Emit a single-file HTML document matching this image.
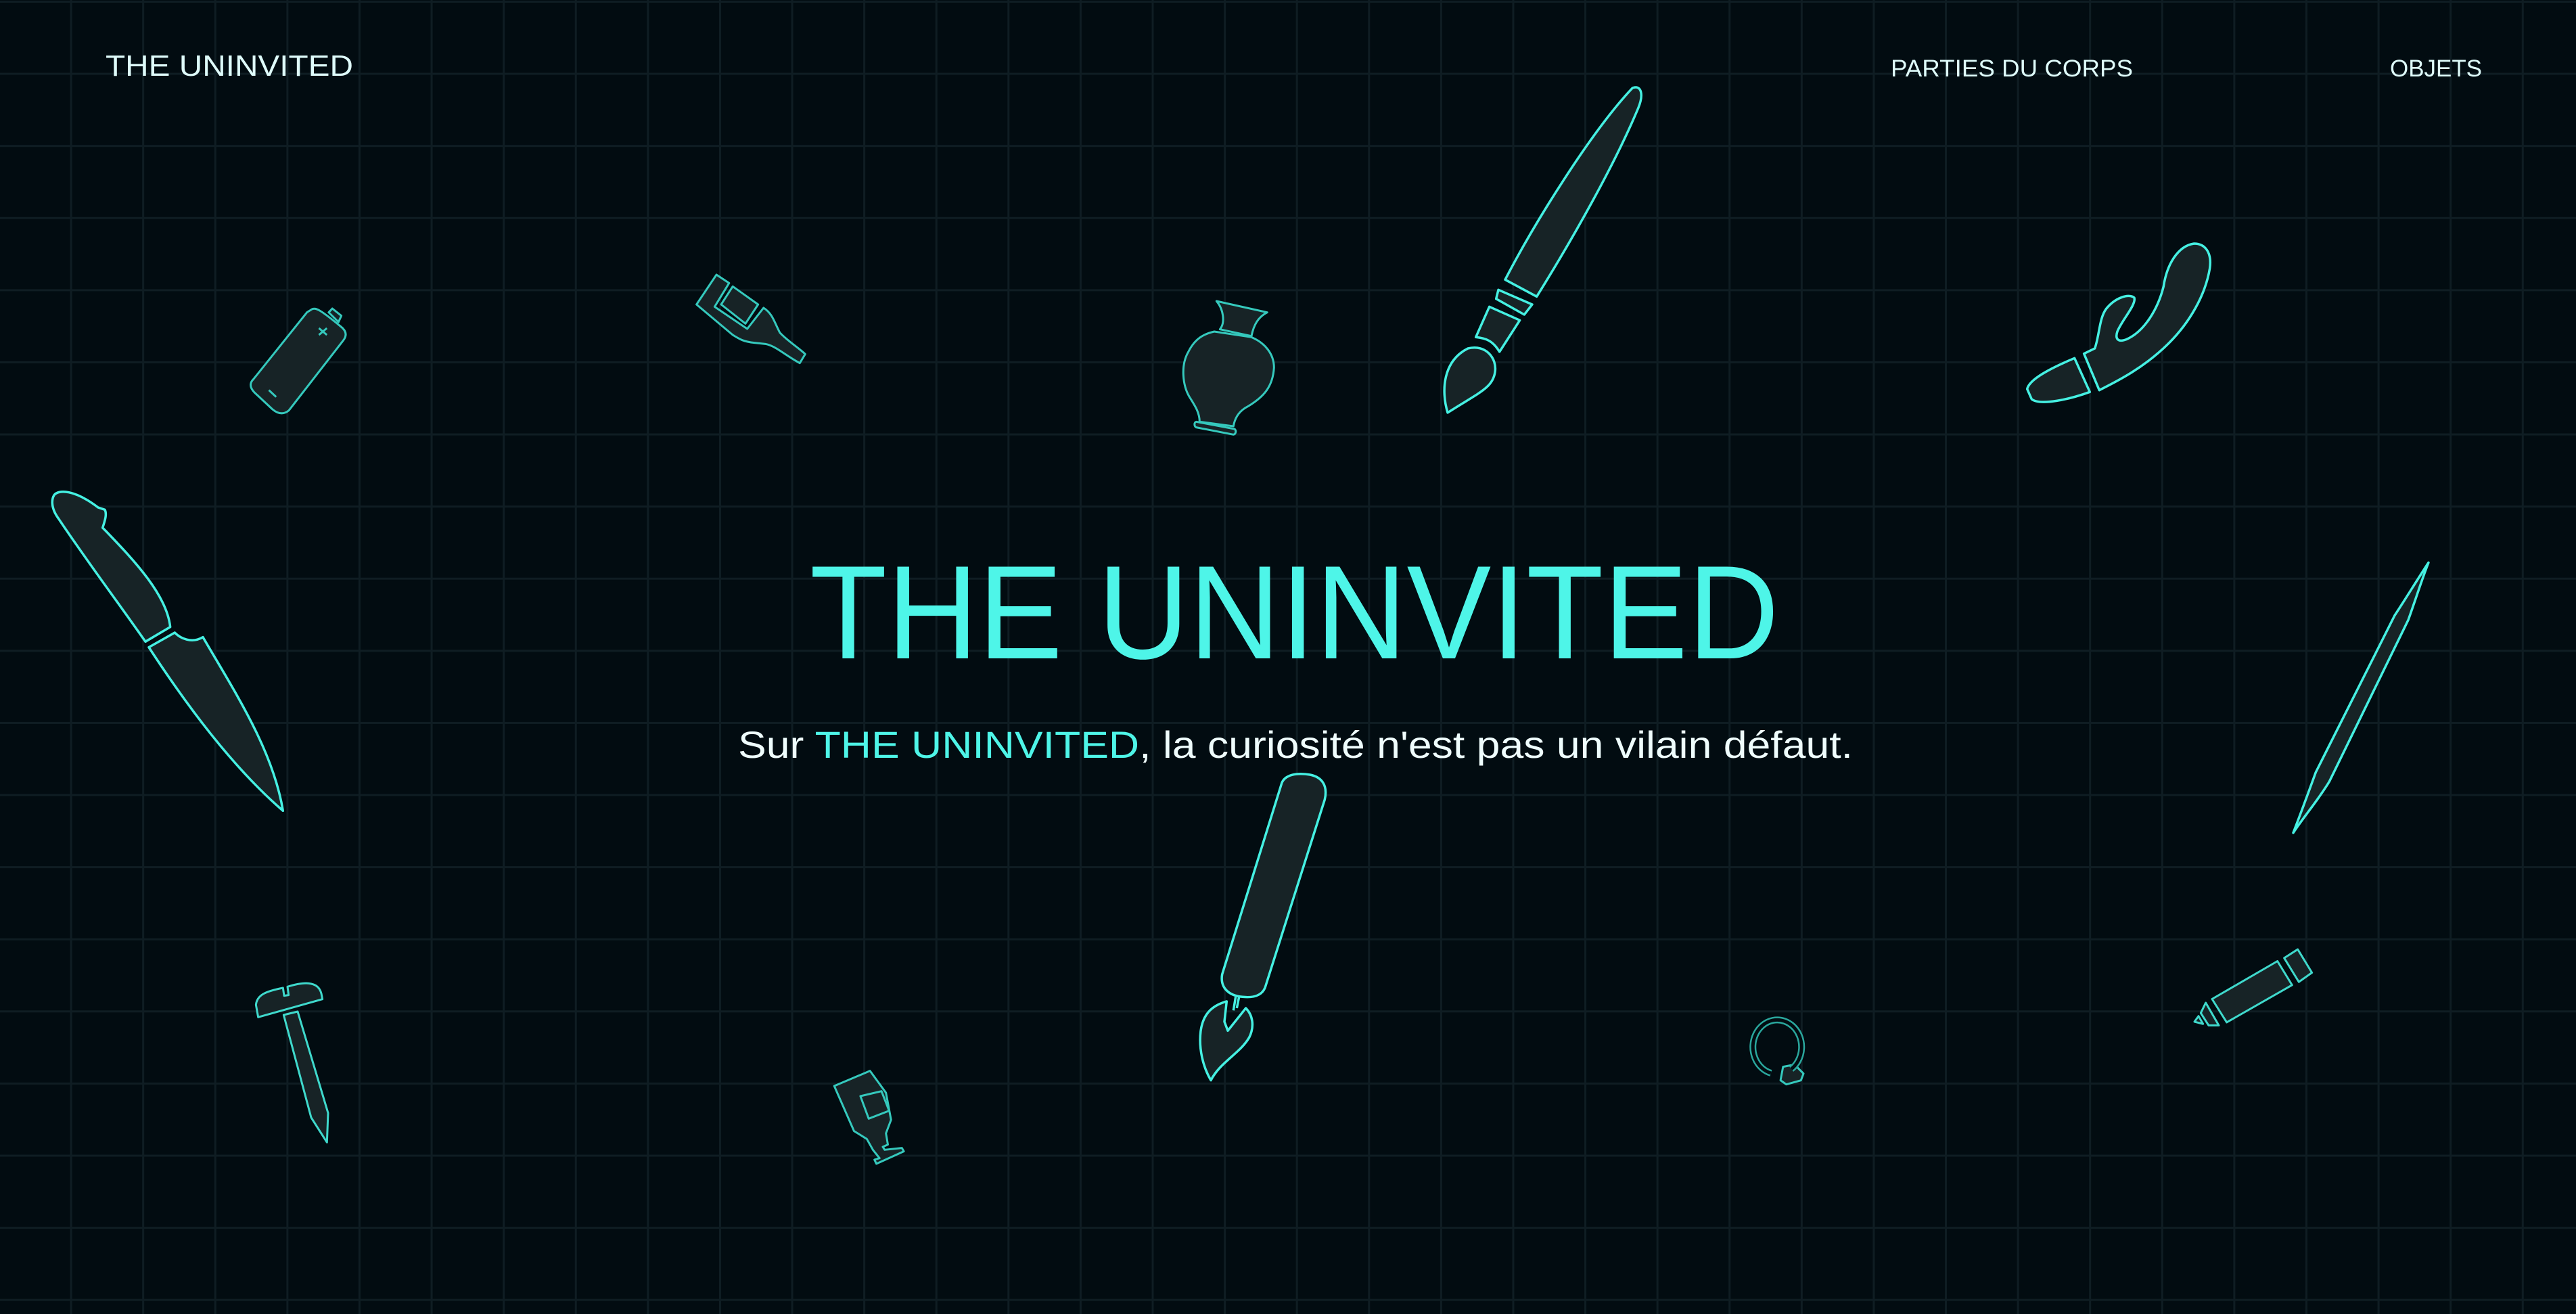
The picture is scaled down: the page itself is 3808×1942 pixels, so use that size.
<!DOCTYPE html>
<html><head><meta charset="utf-8"><style>
html,body{margin:0;padding:0;}
body{width:3808px;height:1942px;overflow:hidden;background-color:#020c11;
background-image:linear-gradient(to right,#0f1d23 3px,transparent 3px),linear-gradient(to bottom,#0f1d23 3px,transparent 3px);
background-size:106.6px 106.6px;background-position:-3px 1px;}
svg{position:absolute;left:0;top:0;}
</style></head><body>
<svg width="3808" height="1942" viewBox="0 0 3808 1942" xmlns="http://www.w3.org/2000/svg">
<g font-family="'Liberation Sans', sans-serif">
<text x="156" y="112" font-size="44" fill="#dffcfb" textLength="366" lengthAdjust="spacingAndGlyphs">THE UNINVITED</text>
<text x="2795" y="113" font-size="35" fill="#dffcfb" textLength="358" lengthAdjust="spacingAndGlyphs">PARTIES DU CORPS</text>
<text x="3533" y="113" font-size="35" fill="#dffcfb" textLength="136" lengthAdjust="spacingAndGlyphs">OBJETS</text>
<text x="1197" y="973" font-size="197" fill="#4ef5e8" textLength="1433" lengthAdjust="spacingAndGlyphs">THE UNINVITED</text>
<text x="1091" y="1120" font-size="56" fill="#effdfd" textLength="1648" lengthAdjust="spacingAndGlyphs">Sur <tspan fill="#4ef5e8">THE UNINVITED</tspan>, la curiosité n'est pas un vilain défaut.</text>
</g>
<g fill="#172326" stroke="#45f0e2" stroke-width="3.5" stroke-linejoin="round">
<!-- knife -->
<g transform="translate(60,700) scale(0.3333)">
<path vector-effect="non-scaling-stroke" d="M60,95 C80,70 150,70 255,150 L285,160 C295,180 285,210 275,240 L290,255 C420,390 560,540 575,680 L465,745 C350,580 200,380 80,200 C50,160 45,120 60,95 Z"/>
<path vector-effect="non-scaling-stroke" d="M480,770 L595,705 C620,730 670,755 720,725 C850,950 1030,1220 1075,1495 C850,1300 650,1030 480,770 Z"/>
</g>
<!-- big brush -->
<g transform="translate(2120,110) scale(0.3333)">
<path vector-effect="non-scaling-stroke" d="M315,910 C450,650 700,250 880,60 C920,45 930,90 905,150 C800,400 620,720 455,985 Z"/>
<path vector-effect="non-scaling-stroke" d="M285,955 L435,1020 L400,1065 L275,995 Z"/>
<path vector-effect="non-scaling-stroke" d="M245,1030 L380,1090 L290,1230 C260,1180 230,1170 185,1165 Z"/>
<path vector-effect="non-scaling-stroke" d="M60,1500 C30,1400 40,1270 150,1215 C230,1195 280,1260 270,1320 C260,1390 200,1410 60,1500 Z"/>
</g>
<!-- vibrator -->
<g transform="translate(2950,330) scale(0.3333)">
<path vector-effect="non-scaling-stroke" d="M140,735 C150,690 250,640 350,598 L418,748 C330,780 200,810 160,780 Z"/>
<path vector-effect="non-scaling-stroke" d="M392,578 L440,555 C460,500 460,420 490,380 C530,330 590,310 615,330 C625,360 560,430 540,480 C530,510 540,530 580,515 C660,480 720,380 745,280 C760,180 810,100 880,90 C930,90 960,130 950,200 C930,320 860,440 770,530 C660,640 540,700 460,740 Z"/>
</g>
<!-- middle brush -->
<g transform="translate(1760,1130) scale(0.3333)">
<path vector-effect="non-scaling-stroke" d="M405,80 C420,45 470,35 530,45 C580,55 610,90 595,155 L330,990 C315,1025 280,1035 230,1030 C170,1025 130,990 140,930 Z"/>
<path vector-effect="non-scaling-stroke" fill="none" d="M190,1090 L200,1030 M215,1030 L205,1080"/>
<path vector-effect="non-scaling-stroke" d="M160,1050 L150,1140 L165,1180 L245,1080 C275,1110 285,1160 260,1210 C220,1280 130,1320 90,1400 C55,1340 35,1260 45,1180 C55,1110 90,1070 160,1050 Z"/>
</g>
<!-- stick + pen -->
<g transform="translate(3230,820) scale(0.3333,0.4591)">
<path vector-effect="non-scaling-stroke" d="M1080,25 C1050,80 1020,150 990,210 L640,730 C590,790 530,840 480,895 C520,820 550,760 580,700 L930,195 C980,140 1030,80 1080,25 Z"/>
<g stroke="#3fd9cc" stroke-width="3">
<path vector-effect="non-scaling-stroke" d="M120,1430 L410,1308 L475,1385 L185,1505 Z"/>
<path vector-effect="non-scaling-stroke" d="M440,1298 L500,1270 L563,1345 L505,1375 Z"/>
<path vector-effect="non-scaling-stroke" d="M70,1475 L92,1442 L150,1515 L105,1515 Z"/>
<path vector-effect="non-scaling-stroke" d="M42,1503 L60,1485 L80,1510 Z"/>
</g>
</g>
<!-- hammer / nail -->
<g transform="translate(360,1430) scale(0.3333)" stroke="#3fd9cc" stroke-width="3">
<path vector-effect="non-scaling-stroke" d="M55,165 C60,120 100,105 175,90 L180,125 L200,122 L195,85 C260,65 330,55 345,115 L350,140 L65,220 Z"/>
<path vector-effect="non-scaling-stroke" d="M178,210 L240,195 L375,645 L370,775 L300,665 Z"/>
</g>
</g>
<g fill="#172326" stroke="#35c9bd" stroke-width="3" stroke-linejoin="round">
<!-- battery & bottle -->
<g transform="translate(360,400) scale(0.5357,0.3333)">
<path vector-effect="non-scaling-stroke" d="M190,170 C200,165 210,170 270,250 C285,270 285,290 275,310 L125,620 C110,640 95,635 80,615 L30,540 C15,515 18,495 28,480 L175,185 Z"/>
<path vector-effect="non-scaling-stroke" d="M235,185 L245,168 L270,200 L262,228 Z"/>
<path vector-effect="non-scaling-stroke" fill="none" d="M208,255 L230,285 M230,255 L208,285 M70,530 L90,560"/>
<path vector-effect="non-scaling-stroke" d="M1305,18 L1340,55 L1300,160 L1390,258 L1435,165 C1460,190 1465,230 1480,275 C1500,310 1530,340 1550,370 L1535,410 C1490,370 1470,335 1440,325 L1410,320 C1380,315 1370,305 1350,285 L1250,150 Z"/>
<path vector-effect="non-scaling-stroke" d="M1350,70 L1420,150 L1385,235 L1318,150 Z"/>
</g>
<!-- vase -->
<g transform="translate(1730,430) scale(0.3333)">
<path vector-effect="non-scaling-stroke" d="M205,45 L430,95 C390,115 370,150 360,200 L220,170 C245,140 235,80 205,45 Z"/>
<path vector-effect="non-scaling-stroke" d="M195,180 L360,205 C420,230 460,280 460,340 C455,420 420,470 330,520 C300,540 285,570 280,600 L130,580 C130,540 110,510 85,470 C55,420 45,330 80,270 C110,210 150,190 195,180 Z"/>
<path vector-effect="non-scaling-stroke" d="M115,580 L285,612 C295,620 290,635 280,637 L115,605 C105,600 105,582 115,580 Z"/>
</g>
<!-- small bottle & ring -->
<g transform="translate(1220,1490) scale(0.9439,0.3333)">
<path vector-effect="non-scaling-stroke" d="M14,345 L70,278 L95,375 L103,495 L95,555 L98,605 L90,615 L93,628 L120,620 L123,635 L80,690 L77,672 L85,665 L75,630 L65,580 L45,545 Z"/>
<path vector-effect="non-scaling-stroke" d="M55,390 L88,368 L100,455 L68,490 Z"/>
<path vector-effect="non-scaling-stroke" d="M1500,260 L1518,250 L1532,290 L1528,320 L1505,338 L1496,320 Z"/>
</g>
<path fill="none" stroke-width="10" stroke="#2aa79d" d="M2618,1586 A36,40 0 1 1 2648,1580"/>
<path fill="none" stroke-width="5" stroke="#020c11" d="M2618,1586 A36,40 0 1 1 2648,1580"/>
</g>
</svg>
</body></html>
